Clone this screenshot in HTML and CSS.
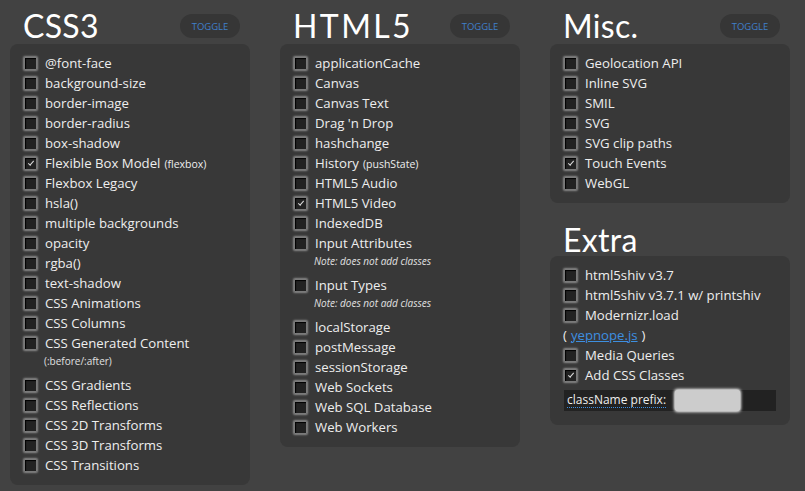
FILE: index.html
```html
<!DOCTYPE html>
<html>
<head>
<meta charset="utf-8">
<link rel="stylesheet" href="styles.css">
</head>
<body>
<div class="page">
  <section class="col">
    <div class="head"><h2>CSS3</h2><button class="toggle">TOGGLE</button></div>
    <ul class="panel">
      <li><span class="cb"></span>@font-face</li>
      <li><span class="cb"></span>background-size</li>
      <li><span class="cb"></span>border-image</li>
      <li><span class="cb"></span>border-radius</li>
      <li><span class="cb"></span>box-shadow</li>
      <li><span class="cb on"></span>Flexible Box Model <small>(flexbox)</small></li>
      <li><span class="cb"></span>Flexbox Legacy</li>
      <li><span class="cb"></span>hsla()</li>
      <li><span class="cb"></span>multiple backgrounds</li>
      <li><span class="cb"></span>opacity</li>
      <li><span class="cb"></span>rgba()</li>
      <li><span class="cb"></span>text-shadow</li>
      <li><span class="cb"></span>CSS Animations</li>
      <li><span class="cb"></span>CSS Columns</li>
      <li class="tall"><div class="row"><span class="cb"></span>CSS Generated Content</div><div class="sub">(:before/:after)</div></li>
      <li><span class="cb"></span>CSS Gradients</li>
      <li><span class="cb"></span>CSS Reflections</li>
      <li><span class="cb"></span>CSS 2D Transforms</li>
      <li><span class="cb"></span>CSS 3D Transforms</li>
      <li><span class="cb"></span>CSS Transitions</li>
    </ul>
  </section>
  <section class="col">
    <div class="head"><h2 class="wide">HTML5</h2><button class="toggle">TOGGLE</button></div>
    <ul class="panel">
      <li><span class="cb"></span>applicationCache</li>
      <li><span class="cb"></span>Canvas</li>
      <li><span class="cb"></span>Canvas Text</li>
      <li><span class="cb"></span>Drag 'n Drop</li>
      <li><span class="cb"></span>hashchange</li>
      <li><span class="cb"></span>History <small>(pushState)</small></li>
      <li><span class="cb"></span>HTML5 Audio</li>
      <li><span class="cb on"></span>HTML5 Video</li>
      <li><span class="cb"></span>IndexedDB</li>
      <li class="tall"><div class="row"><span class="cb"></span>Input Attributes</div><div class="sub note">Note: does not add classes</div></li>
      <li class="tall"><div class="row"><span class="cb"></span>Input Types</div><div class="sub note">Note: does not add classes</div></li>
      <li><span class="cb"></span>localStorage</li>
      <li><span class="cb"></span>postMessage</li>
      <li><span class="cb"></span>sessionStorage</li>
      <li><span class="cb"></span>Web Sockets</li>
      <li><span class="cb"></span>Web SQL Database</li>
      <li><span class="cb"></span>Web Workers</li>
    </ul>
  </section>
  <section class="col">
    <div class="head"><h2>Misc.</h2><button class="toggle">TOGGLE</button></div>
    <ul class="panel">
      <li><span class="cb"></span>Geolocation API</li>
      <li><span class="cb"></span>Inline SVG</li>
      <li><span class="cb"></span>SMIL</li>
      <li><span class="cb"></span>SVG</li>
      <li><span class="cb"></span>SVG clip paths</li>
      <li><span class="cb on"></span>Touch Events</li>
      <li><span class="cb"></span>WebGL</li>
    </ul>
    <div class="head extra"><h2>Extra</h2></div>
    <ul class="panel">
      <li><span class="cb"></span>html5shiv v3.7</li>
      <li><span class="cb"></span>html5shiv v3.7.1 w/ printshiv</li>
      <li><span class="cb"></span>Modernizr.load</li>
      <li class="plain">( <a href="#">yepnope.js</a> )</li>
      <li><span class="cb"></span>Media Queries</li>
      <li><span class="cb on"></span>Add CSS Classes</li>
      <li class="prefix"><label>className prefix:</label><span class="input"></span></li>
    </ul>
  </section>
</div>
</body>
</html>
```
FILE: styles.css
```css
html, body {
  margin: 0;
  padding: 0;
  background: #424242;
}
body {
  font-family: "Open Sans", Lato, sans-serif;
  color: #eeeeee;
  width: 805px;
  height: 491px;
  overflow: hidden;
}
.page {
  display: flex;
  gap: 30px;
  padding: 0 10px;
}
.col {
  width: 240px;
  display: flex;
  flex-direction: column;
}
.head {
  height: 44px;
  display: flex;
  align-items: center;
  justify-content: space-between;
  padding: 8px 10px 0 13px;
  box-sizing: border-box;
}
.head.extra {
  height: 53px;
  padding-top: 20px;
}
h2 {
  margin: 0;
  font-family: Lato, sans-serif;
  font-size: 32px;
  font-weight: 400;
  color: #ffffff;
  letter-spacing: 0.3px;
  line-height: 32px;
}
h2.wide {
  letter-spacing: 2.4px;
}
.toggle {
  border: none;
  background: #363636;
  color: #3f7fcb;
  font-family: "Open Sans", sans-serif;
  font-size: 9.5px;
  height: 24px;
  width: 60px;
  border-radius: 12px;
  padding: 0;
}
.panel {
  list-style: none;
  margin: 0;
  padding: 9px 0 10px 14px;
  background: #383838;
  border-radius: 8px;
}
.panel li {
  height: 20px;
  display: flex;
  align-items: center;
  font-size: 13.2px;
  white-space: nowrap;
}
.panel li.tall {
  height: 42px;
  display: block;
}
.row {
  height: 20px;
  display: flex;
  align-items: center;
}
.sub {
  font-size: 10px;
  line-height: 14px;
  margin-top: 1px;
  color: #e0e0e0;
  padding-left: 20px;
}
.sub.note {
  font-style: italic;
}
small {
  font-size: 10.5px;
  margin-left: 4px;
  margin-top: 1px;
}
.cb {
  width: 11px;
  height: 11px;
  background: #222222;
  border: 1px solid #7a7a7a;
  box-shadow: 0 0 2px 1px #8a8a8a, inset 1px 1px 1px #000;
  margin-right: 8px;
  flex: none;
  position: relative;
  border-radius: 1px;
}
.cb.on::after {
  content: "";
  position: absolute;
  left: 3px;
  top: 3px;
  width: 5px;
  height: 2px;
  border-left: 1.5px solid #ddd;
  border-bottom: 1.5px solid #ddd;
  transform: rotate(-50deg);
}
.panel li.plain {
  margin-left: -1px;
}
.plain a {
  color: #3d8fe0;
  margin: 0 4px;
}
.panel li.prefix {
  margin: 5px 14px 4px 0;
  height: 21px;
  background: #222222;
  padding-left: 3px;
  font-size: 12px;
}
.prefix label {
  border-bottom: 1px dotted #3d8fe0;
  line-height: 14px;
  margin-right: 9px;
}
.prefix .input {
  width: 65px;
  height: 21px;
  background: #cccccc;
  border-radius: 3px;
  box-shadow: 0 0 3px 1px #fff;
}
```
